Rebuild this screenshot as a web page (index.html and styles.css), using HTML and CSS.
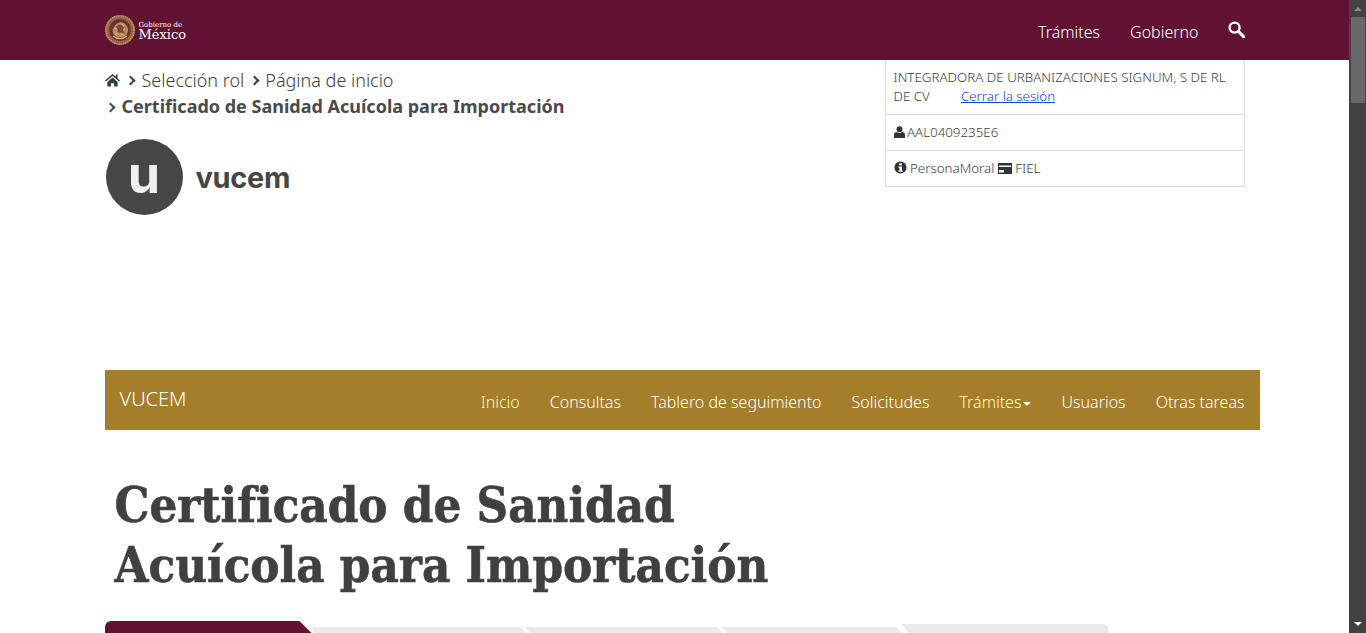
FILE: index.html
```html
<!DOCTYPE html>
<html lang="es">
<head>
<meta charset="utf-8">
<title>Certificado de Sanidad Acuícola para Importación</title>
<link rel="stylesheet" href="styles.css">
</head>
<body>
<div class="viewport">
  <div class="page">
    <header class="topbar">
      <div class="container topbar-inner">
        <a class="gob-logo">
          <svg class="seal" viewBox="0 0 30 30" width="30" height="30" aria-hidden="true">
            <circle cx="15" cy="15" r="15" fill="#8f6440"/>
            <circle cx="15" cy="15" r="14" fill="none" stroke="#c39a62" stroke-width="1.6" stroke-dasharray="1.3 .9"/>
            <circle cx="15" cy="15" r="11.4" fill="#6f2d35"/>
            <circle cx="15" cy="15" r="11.4" fill="none" stroke="#a9794a" stroke-width="1.4" stroke-dasharray="1 1"/>
            <path d="M7.500 16c1-5 4-8 8-9 4 .5 7 3.500 7.500 7.500.3 4.500-3 8-8 8-4 0-7-2.500-7.500-6.500z" fill="#b98d58"/>
            <path d="M11 11.500l4-2 4.500 2.500-1.500 3.500 2.500 3.500-5-1.500-3.500 2 .7-4.500z" fill="#7a4a3c"/>
            <path d="M9 13l3 1M17 9l2 3M10 19l4-1M16 19l3 1M20 14l-2 1" stroke="#e2bb82" stroke-width=".9"/>
            <path d="M8 21c4 3.500 10 3.500 14 0" fill="none" stroke="#dcb078" stroke-width="1.200"/>
          </svg>
          <span class="gob-text"><span class="gob-small">Gobierno de</span><span class="gob-big">México</span></span>
        </a>
        <nav class="topnav">
          <a>Trámites</a>
          <a>Gobierno</a>
          <svg class="search" viewBox="0 0 18 18" width="17" height="17" aria-hidden="true">
            <circle cx="7" cy="7" r="5.300" fill="none" stroke="#fff" stroke-width="2.500"/>
            <path d="M11 11l5.500 5.500" stroke="#fff" stroke-width="3.200" stroke-linecap="round"/>
          </svg>
        </nav>
      </div>
    </header>

    <div class="container head-row">
      <div class="head-left">
        <div class="crumbs">
          <div class="crumb-line">
            <svg class="home" viewBox="0 0 16 14" width="15" height="14" aria-hidden="true">
              <path d="M8 .5L0 7.600l1 1.100L8 2.700l7 6 1-1.100-2.600-2.300V1.200h-2v2.300z" fill="#2f3b4a"/>
              <path d="M2.500 9L8 4.200 13.500 9v5H9.700v-3.500H6.300V14H2.500z" fill="#2f3b4a"/>
            </svg>
            <i class="chev"></i><span>Selección rol</span>
            <i class="chev chev-gap"></i><span>Página de inicio</span>
          </div>
          <div class="crumb-current"><i class="chev"></i>Certificado de Sanidad Acuícola para Importación</div>
        </div>
        <div class="vucem-logo">
          <span class="vucem-circle">u</span>
          <span class="vucem-word">vucem</span>
        </div>
      </div>
      <div class="user-box">
        <div class="user-cell user-name">
          <div>INTEGRADORA DE URBANIZACIONES SIGNUM, S DE RL</div>
          <div><span>DE CV</span><a class="logout">Cerrar la sesión</a></div>
        </div>
        <div class="user-cell">
          <svg class="ico" viewBox="0 0 12 13" width="11" height="12" aria-hidden="true"><circle cx="6" cy="3.400" r="3.200" fill="#333"/><path d="M0 13V9.500C0 7.500 1.500 6.500 3 6.500c1 .8 2 1.200 3 1.200s2-.4 3-1.200c1.500 0 3 1 3 3V13z" fill="#333"/></svg>
          <span class="tight">AAL0409235E6</span>
        </div>
        <div class="user-cell">
          <svg class="ico" viewBox="0 0 14 14" width="13" height="13" aria-hidden="true"><circle cx="7" cy="7" r="6.500" fill="#333"/><rect x="5.500" y="2.500" width="3" height="2.200" fill="#fff"/><path d="M4.800 5.800h3.700v4.400h1v1.500H4.800v-1.500h1V7.200h-1z" fill="#fff"/></svg>
          PersonaMoral
          <svg class="ico" viewBox="0 0 14 11" width="14" height="11" aria-hidden="true"><path d="M0 0h14v11H0z" fill="#333"/><path d="M1 2.500h12v1.500H1zM1 7h5v2.500H1z" fill="#fff"/></svg>
          FIEL
        </div>
      </div>
    </div>

    <div class="container gold-wrap">
      <nav class="goldnav">
        <span class="brand">VUCEM</span>
        <div class="goldlinks">
          <a class="active">Inicio</a>
          <a>Consultas</a>
          <a>Tablero de seguimiento</a>
          <a>Solicitudes</a>
          <a class="active">Trámites<i class="caret"></i></a>
          <a>Usuarios</a>
          <a>Otras tareas</a>
        </div>
      </nav>
    </div>

    <div class="container">
      <h1 class="title">Certificado de Sanidad<br>Acuícola para Importación</h1>
      <div class="tabs">
        <div class="tab tab-first"></div>
        <div class="tab tab-2"></div>
        <div class="tab tab-3"></div>
        <div class="tab tab-4"></div>
        <div class="tab tab-last"></div>
      </div>
    </div>
  </div>
  <div class="scrollbar">
    <span class="arrow-up"></span>
    <span class="thumb"></span>
    <span class="track"></span>
    <span class="arrow-down"></span>
  </div>
</div>
</body>
</html>
```
FILE: styles.css
```css
* { box-sizing: border-box; }
html, body { margin: 0; height: 100%; overflow: hidden; }
body { font-family: "Noto Sans", "Open Sans", sans-serif; color: #404041; background: #fff; }
.viewport { display: flex; height: 633px; width: 1366px; }
.page { width: 1349px; height: 633px; overflow: hidden; flex: none; }
.container { width: 1170px; margin-left: 89.5px; padding: 0 15px; }

.topbar { height: 60px; background: #611232; }
.topbar-inner { display: flex; justify-content: space-between; align-items: center; height: 60px; }
.gob-logo { display: flex; align-items: center; gap: 4px; color: #fff; }
.seal { display: block; }
.gob-text { display: flex; flex-direction: column; font-family: "DejaVu Serif", serif; }
.gob-small { font-size: 7px; line-height: 8px; margin-top: 2px; }
.gob-big { font-size: 13px; line-height: 12px; }
.topnav { display: flex; align-items: center; gap: 30px; color: #fff; font-size: 16px; font-weight: 300; padding-top: 4px; }
.search { margin: -6px 0 0 -1px; }

.head-row { display: flex; justify-content: space-between; height: 310px; }
.head-left { width: 640px; }
.crumbs { padding-top: 7px; font-size: 18px; font-weight: 300; color: #404041; }
.crumb-line { display: flex; align-items: center; height: 26px; }
.home { margin-right: 7px; }
.chev { display: inline-block; width: 7px; height: 7px; border-top: 2.500px solid #404041; border-right: 2.500px solid #404041; transform: rotate(45deg); margin-right: 8px; flex: none; }
.chev-gap { margin-left: 7px; margin-right: 7px; }
.crumb-current { font-weight: 700; height: 26px; line-height: 26px; white-space: nowrap; padding-left: 2px; color: #4a4a4a; }
.crumb-current .chev { border-color: #4a4a4a; vertical-align: 2px; }
.vucem-logo { display: flex; align-items: center; margin: 20px 0 0 1px; gap: 13px; }
.vucem-circle { width: 77px; height: 76px; border-radius: 50%; background: #464646; color: #f0f0f0; font-family: "Inter", sans-serif; font-weight: 700; font-size: 52px; line-height: 72px; text-align: center; }
.vucem-word { font-family: "Inter", sans-serif; font-weight: 700; font-size: 29px; color: #464646; letter-spacing: -.3px; }

.user-box { width: 360px; height: 127px; border: 1px solid #ddd; border-top: 0; font-size: 13.33px; font-weight: 300; color: #404041; }
.user-cell { padding: 8px; line-height: 19px; border-bottom: 1px solid #ddd; height: 36px; }
.user-cell:last-child { border-bottom: 0; }
.user-name { height: 55px; }
.logout { color: #1a3fd8; text-decoration: underline; margin-left: 31px; }
.ico { vertical-align: -1px; }
.tight { margin-left: -1px; }

.gold-wrap { padding-right: 0; }
.goldnav { width: 1155px; height: 60px; background: #a57e2c; display: flex; justify-content: space-between; padding: 0 15px; color: #fff; }
.brand { font-size: 20px; line-height: 58px; font-weight: 300; }
.goldlinks { display: flex; gap: 30px; font-size: 16px; font-weight: 300; line-height: 64px; }
.goldlinks .active { color: #ffffb8; }
.caret { display: inline-block; border-top: 4px solid #fff; border-left: 4px solid transparent; border-right: 4px solid transparent; margin-left: 2px; vertical-align: 2px; }

.title { margin: 45px 0 0 10px; font-family: "DejaVu Serif", serif; font-stretch: condensed; font-weight: 700; font-size: 48.7px; line-height: 60px; color: #404041; white-space: nowrap; -webkit-text-stroke: .6px #404041; }
.tabs { display: flex; align-items: flex-end; height: 13px; margin-top: 26px; width: 1004px; }
.tab { background: #ebebeb; height: 7px; flex: none; }
.tab-first { width: 208px; height: 13px; background: #611232; border-top-left-radius: 6px; clip-path: polygon(0 0, calc(100% - 13px) 0, 100% 100%, 0 100%); }
.tab-2 { width: 218px; margin-left: -3px; clip-path: polygon(0 0, calc(100% - 7px) 0, 100% 100%, 7px 100%); }
.tab-3 { width: 199px; margin-left: -3px; clip-path: polygon(0 0, calc(100% - 7px) 0, 100% 100%, 7px 100%); }
.tab-4 { width: 182px; margin-left: -2px; clip-path: polygon(0 0, calc(100% - 7px) 0, 100% 100%, 7px 100%); }
.tab-last { width: 208px; height: 10px; margin-left: -3px; border-top-right-radius: 6px; clip-path: polygon(0 0, 100% 0, 100% 100%, 10px 100%); }

.scrollbar { width: 17px; height: 633px; background: #424242; display: flex; flex-direction: column; align-items: center; flex: none; }
.arrow-up { margin-top: 7px; border-bottom: 4px solid #8a8a8a; border-left: 4px solid transparent; border-right: 4px solid transparent; }
.thumb { width: 14px; height: 86px; margin-top: 6px; background: #686868; }
.track { flex: 1; }
.arrow-down { margin-bottom: 7px; border-top: 4px solid #fff; border-left: 4px solid transparent; border-right: 4px solid transparent; }
```
